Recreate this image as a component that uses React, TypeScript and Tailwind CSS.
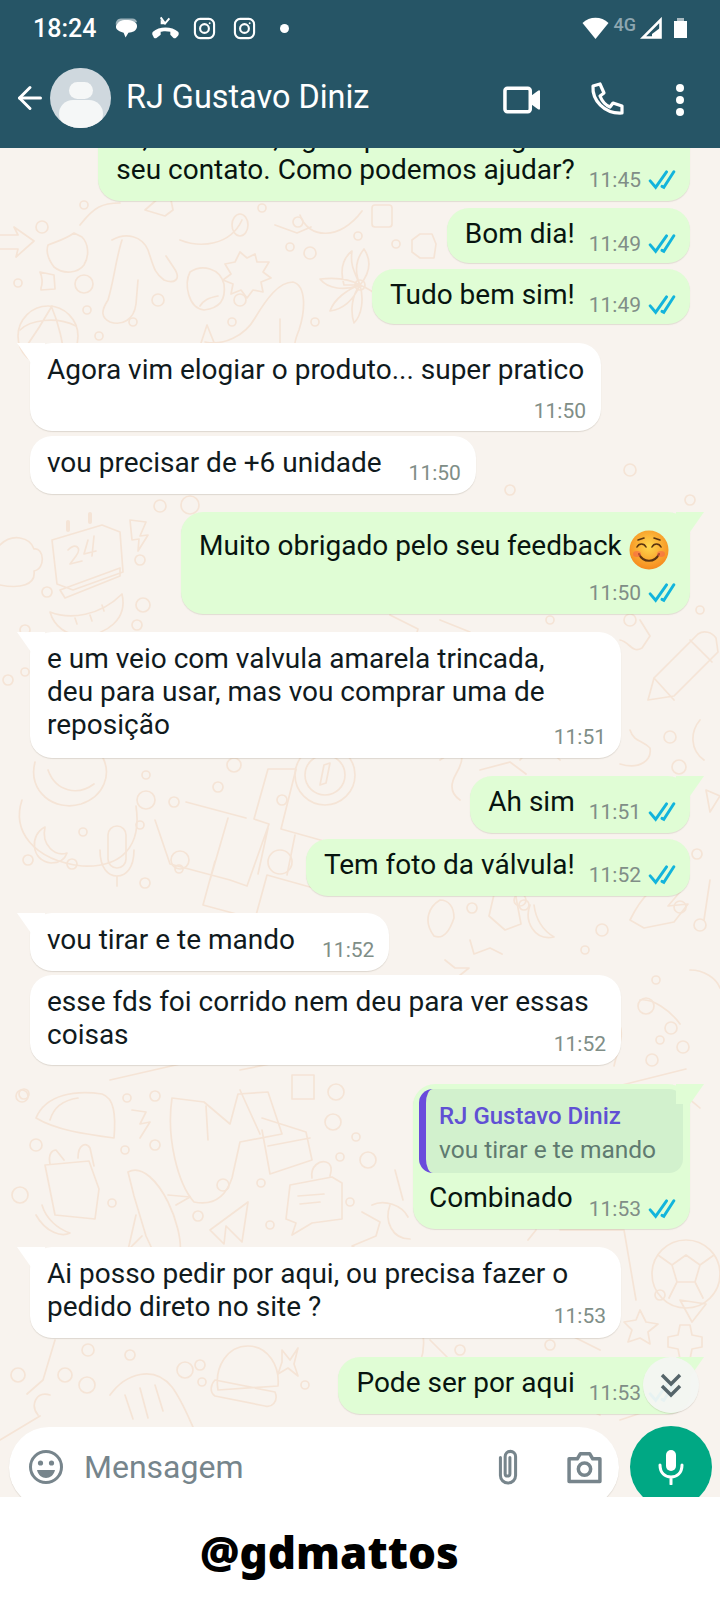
import React from 'react';
import { ArrowLeft } from 'lucide-react';

const FONT = "font-['Roboto',sans-serif]";

// small rings scattered over the wallpaper
const RINGS = [
  [42, 227, 6], [84, 205, 4], [262, 208, 4], [18, 283, 4], [84, 284, 9], [158, 300, 6], [87, 310, 4], [133, 322, 4],
  [240, 300, 6], [290, 247, 4], [310, 253, 6], [232, 322, 4], [315, 322, 4], [358, 236, 4], [396, 244, 4], [99, 336, 4],
  [160, 506, 6], [190, 505, 9], [140, 560, 5], [47, 592, 5], [143, 605, 7], [137, 625, 5], [25, 630, 5], [8, 680, 5],
  [25, 672, 4], [146, 775, 4], [234, 765, 7], [218, 787, 5], [146, 800, 9], [174, 802, 5], [282, 800, 5], [28, 860, 5],
  [83, 832, 4], [140, 825, 4], [180, 860, 9], [72, 864, 5], [179, 869, 4], [145, 883, 5], [280, 862, 12], [24, 1094, 5],
  [127, 1098, 4], [155, 1096, 5], [22, 1096, 6], [36, 1145, 6], [125, 1150, 4], [155, 1145, 5], [336, 1092, 8], [333, 1122, 8],
  [356, 1137, 4], [340, 1157, 4], [368, 1160, 8], [223, 1185, 6], [261, 1183, 4], [112, 1203, 4], [198, 1216, 5], [270, 1225, 4],
  [350, 1202, 4], [20, 1195, 8], [88, 1350, 6], [130, 1355, 5], [65, 1375, 7], [87, 1385, 8], [200, 1365, 5], [202, 1382, 4],
  [305, 1385, 4], [18, 1375, 7], [185, 1370, 8], [646, 1006, 8], [642, 1098, 5], [660, 1040, 4], [670, 737, 6], [679, 767, 7],
  [697, 854, 5], [680, 907, 6], [700, 925, 6], [602, 930, 6], [472, 908, 5], [524, 905, 5], [585, 950, 4], [656, 980, 4],
  [671, 1028, 6], [683, 1047, 6], [652, 1060, 6], [550, 1345, 5], [660, 1295, 5], [630, 620, 6], [700, 610, 4], [550, 620, 4],
  [400, 460, 6], [510, 490, 5], [520, 900, 6], [430, 990, 5], [460, 1350, 5], [420, 1330, 6], [630, 470, 6], [690, 500, 5],
];

function Wallpaper() {
  return (
    <svg className="absolute inset-0 h-full w-full" viewBox="0 148 720 1349" preserveAspectRatio="none" fill="none" stroke="#f5e4d6" strokeWidth="1.7" strokeLinecap="round" strokeLinejoin="round">
      {RINGS.map(([x, y, r], i) => <circle key={i} cx={x} cy={y} r={r} />)}
      {/* runner */}
      <path d="M80 225c14-18 22-22 40-22M48 245c10-4 18-6 26-12l8 4c6 6 8 18 2 28-6 8-20 10-30 2-6-8-8-16-6-22zM112 240c14-8 30-4 36 10 6 18 6 22 16 30 10 4 18 0 10-12l-8-12M122 240c-6 18-8 40-14 60-8 12-6 18 2 22 12 4 24-2 26-18l2-24" />
      <path d="M180 240c20 8 50 6 62-20M145 210l16-14 10 4 2 10-8 6z" />
      <ellipse cx="240" cy="225" rx="8" ry="11" />
      {/* bits on the left */}
      <path d="M0 235h18l-4-8 20 14-18 16 2-8H0M40 272l14 3 1 14-14 1 0-2c2-5 1-12-1-16z" />
      <circle cx="48" cy="336" r="30" />
      <path d="M20 330c10-10 36-14 56-4M24 350c14-20 20-30 28-44M52 308c6 14 12 36 12 54" />
      {/* badge, thumb, whale, flower */}
      <path d="M240 252l7 6 8-4 2 8 12 0-6 10 8 6-10 4 2 10-10-2-6 8-6-8-10 4 2-10-10-4 8-6-6-10 10-2z" />
      <path d="M190 272c12-8 30-4 34 12 2 16-4 24-20 26-16-2-20-26-14-38zM200 306c4-6 8-8 18-10" />
      <path d="M205 342c18 4 40-6 50-24 12-20 24-36 38-36 14 4 12 30 6 48-4 10-6 16-2 24M280 345v-26M215 345l-8-20-6 18" />
      <path d="M360 285c-6-14-4-26 4-36 8 12 6 24-4 36zM360 285c-6-14-10-20-8-34-10 8-12 20-8 34zM360 285c-10-6-22-8-40-6 8 10 24 12 40 6zM360 285c-12 4-26 14-30 26 14-2 24-12 30-26zM360 285c-8 10-10 26-6 38 8-8 10-24 6-38zM360 285c14 6 24 14 30 30" />
      <circle cx="360" cy="285" r="5" />
      <path d="M275 225l22 8 14-6M300 215c8 24 40 26 62-4" />
      <circle cx="298" cy="222" r="5" />
      <rect x="372" y="205" width="20" height="22" rx="3" />
      <path d="M412 240l8-6 12 0 4 10-2 14-14 0-8-6z" />
      {/* calendar */}
      <path d="M52 540l50-15 18 7 3 40-50 18-16-6zM60 590l60-22v8l-55 22z" />
      <path d="M68 530v-8M90 522v-8" strokeWidth="4" />
      <path d="M68 550c8-8 14-2 8 6l-6 8 12-3M88 540l-4 14 12-3M94 536l-2 20" />
      <path d="M130 520l16 2-6 14 8-1-10 16 1-12-7 1z" />
      {/* watermelon */}
      <path d="M50 612c20 8 50 4 72-18 6 26-16 40-38 42-18 0-30-10-34-24z" />
      <path d="M75 618l2 6M90 615l2 6M102 605l2 6" />
      <path d="M0 545c12-12 30-8 34 4 10-2 12 20 0 22 2 14-14 18-34 14" />
      {/* smiley and compass */}
      <path d="M35 762c-8 30 20 50 46 42 24-8 30-30 22-46M48 770c8 22 30 26 46 14" />
      <circle cx="325" cy="775" r="30" /><circle cx="325" cy="775" r="20" />
      <path d="M320 785l4-20 6-2-4 20z" />
      <path d="M22 800c-10 30 10 60 60 66 40 2 60-20 54-60" />
      {/* crossword */}
      <path d="M155 820l15 44 60 16 17 6 22-62-15-5 14-50h28l-15 60 50 14-14 46-50-14-12 44-52-14 12-44M186 802l60 16M210 880l18-62M268 828l-10 46M295 835l-8 40" />
      <path d="M45 827c-16 8-14 34 6 36 10 0 14-4 16-10-12 4-26-8-22-26z" />
      <rect x="108" y="826" width="18" height="42" rx="9" />
      <path d="M100 850c0 18 8 26 17 26s17-8 17-26M117 876v10" />
      {/* taco */}
      <path d="M36 1118c10-24 40-28 66-24 12 4 14 20 12 44-30-4-58-8-78-20zM50 1120c4-14 14-20 28-22" />
      <path d="M132 1110l14 2-6 12 10-2-10 16" />
      {/* boots and cake */}
      <path d="M172 1098c-6 40 6 86 22 104 20 4 32-6 38-24l8-36 42-8-14-42-30 2-8 30-26-22zM206 1106l2 34M240 1090l20 44M262 1118l44 14 6 28-42 14-8-44M268 1146l42-8" />
      <path d="M110 1080l70-16M240 1070l80-16" />
      <rect x="292" y="1075" width="22" height="24" />
      {/* bag */}
      <path d="M45 1165l10 50 40 4 4-30-10-28-44 4zM50 1164c-2-10 2-14 6-14l8 10M78 1158c0-14 8-16 12-10l4 18M36 1215c10 18 26 22 34 18-12-4-24-14-28-28" />
      {/* rocket */}
      <path d="M128 1172c14-8 30 10 40 30 8 16 14 38 12 52l-20 12-14-30-12-40zM168 1195l22 2-14 8M136 1215l-8 35 14-14M164 1268l10 22 12-12-8-24" />
      <path d="M210 1230l38-28-6 40-16-16-2 18z" />
      {/* chat bubbles */}
      <path d="M290 1185l42-8 10 6 0 36-30 4-20 12 4-12-10-4zM298 1196l26-2M300 1204l20-2M312 1178c-2-12 8-18 14-16 6 2 6 8 4 14" />
      <path d="M372 1205c12-6 30 0 36 12M362 1212l18 10-4 14-24 10 16 10M395 1170l8 30" />
      <path d="M390 1205c-6 16 2 34 20 34" />
      {/* hat, star, shrimp, guitar */}
      <path d="M218 1390c-4-24 10-44 30-44s32 20 30 40zM215 1380l60 12c4 10-4 16-10 14l-50-10c-6-4-4-12 0-16z" />
      <path d="M282 1350l8 10 8-12 -4 16 4 12-10-8-10 6 4-12z" />
      <path d="M110 1395c16-22 44-30 62-8 12 16 20 40 26 50M125 1395l8 24M140 1388l8 30M155 1385l8 26" />
      <path d="M55 1340l-12 40-16 14M50 1395c-14-4-20 10-12 20M0 1440l40-24" />
      {/* pencil and right side */}
      <path d="M648 700l6-22 44-44c6-4 14-2 18 4l2 14-44 44zM654 678l20 22M690 640l22 22" />
      <path d="M620 640c10 2 12 14 22 8l8-12-10-16M630 730c4 12 12 10 20 18 2 12-10 22-30 16" />
      <path d="M700 720c-10 12-10 30 4 40M706 790l14 6-10 16zM710 880l-6 40" />
      <path d="M440 760l18-12c6 6 4 16-2 26-8 14-2 22 4 26M480 770l30-8 16 12M520 760c10-14 30-12 40 0" />
      <path d="M440 900c-10 6-18 20-6 36 10 4 16-6 20-18 0-12-6-18-14-18zM495 890l20 2 6 32-16 6-16-14zM470 940l4 14 16-6 12 6M445 960l10 8 14 0-10 8M530 905c-6 16 4 36 24 32-10-6-18-16-20-32" />
      <path d="M630 920c12-24 26-40 44-36l6 8-12 14 20-2-14 18-30 6zM690 970c14 0 26 8 30 18M640 1000c12-2 30 10 40 24" />
      <path d="M560 1020c20-16 50-8 60 6 4 10-2 22-6 40" />
      <path d="M640 1100c14-10 40-12 60 8M622 1085l64-16" />
      <circle cx="686" cy="1274" r="34" />
      <path d="M672 1265l14-10 14 10-5 17h-18zM672 1265l-14-10M700 1265l14-10M677 1282l-8 16M695 1282l8 16M528 1240l8-10M560 1230l64 0 12 70" />
      <path d="M680 1300l26 4-14 18zM640 1310l6 12 12 2-10 8 2 12-10-6-12 4 4-12-8-8 12-2zM680 1325h10l2 10 10 2v10l-10 2-2 10h-10l-2-10-10-2v-10l10-2z" />
      <path d="M430 1340l40 40M540 1320l60 30M400 1300c30 20 30 60 8 80M470 1370l-20 30M500 1380c10-14 30-14 40 0M620 1420l30-10" />
      <path d="M400 460l30 10M440 620l30 12M390 615l28 14-6 20M600 1415l-14-6" />
    </svg>
  );
}

function Ticks() {
  return (
    <svg viewBox="0 0 30 22" className="h-[20px] w-[28px]" fill="none" stroke="#12b4dc" strokeWidth="3.2" strokeLinecap="round">
      <path d="M2 12l6 7L20 2" />
      <path d="M15 18l2 1L28 2" />
    </svg>
  );
}

function Time({ time, read }: { time: string; read?: boolean }) {
  return (
    <span className="flex shrink-0 items-center gap-[7px] text-[21px] leading-[22px] text-[#808e87]">
      {time}
      {read && <Ticks />}
    </span>
  );
}

function TailOut() {
  return <span className="absolute right-[-14px] top-0 h-[20px] w-[28px] bg-[#e0fdd5] [clip-path:polygon(0_0,100%_0,50%_100%,0_100%)]" />;
}

function TailIn() {
  return <span className="absolute left-[-13px] top-0 h-[20px] w-[28px] bg-white [clip-path:polygon(0_0,100%_0,100%_100%,50%_100%)]" />;
}

function Out({ time, tail, children, className = 'pb-[10px]' }: { time: string; tail?: boolean; children: React.ReactNode; className?: string }) {
  return (
    <div className={`relative mr-[30px] flex items-end gap-[14px] self-end rounded-[22px] bg-[#e0fdd5] pl-[18px] pr-[14px] pt-[10px] shadow-[0_1px_1px_rgba(120,110,90,0.18)] ${className}`}>
      {tail && <TailOut />}
      <span className="mb-[5px] whitespace-nowrap text-[28px] leading-[32px] text-[#07140f]">{children}</span>
      <Time time={time} read />
    </div>
  );
}

function In({ time, tail, multi, children, className = '' }: { time: string; tail?: boolean; multi?: boolean; children: React.ReactNode; className?: string }) {
  return (
    <div className={`relative ml-[30px] flex items-end self-start rounded-[22px] bg-white pl-[17px] pr-[15px] pt-[10px] shadow-[0_1px_1px_rgba(120,110,90,0.2)] ${multi ? 'w-[591px] justify-between' : 'gap-[27px]'} ${className || 'pb-[10px]'}`}>
      {tail && <TailIn />}
      <span className={`whitespace-nowrap text-[28px] leading-[33px] text-[#101a1d] ${multi ? 'mb-[4px] min-w-0 flex-1' : 'mb-[5px]'}`}>{children}</span>
      <Time time={time} />
    </div>
  );
}

function Smile() {
  return (
    <svg viewBox="0 0 40 40" className="mb-[-4px] ml-[7px] inline-block h-[40px] w-[40px] align-middle">
      <defs>
        <radialGradient id="face" cx="50%" cy="40%" r="60%">
          <stop offset="0%" stopColor="#ffd84d" />
          <stop offset="100%" stopColor="#f68a1e" />
        </radialGradient>
      </defs>
      <circle cx="20" cy="20" r="19.5" fill="url(#face)" />
      <path d="M8 17c2-4 7-4 9 0M23 17c2-4 7-4 9 0M9 10l6-2M25 8l6 2" fill="none" stroke="#5b3410" strokeWidth="1.6" strokeLinecap="round" />
      <path d="M10 24c4 9 16 9 20 0" fill="none" stroke="#5b3410" strokeWidth="2" strokeLinecap="round" />
      <ellipse cx="8" cy="24" rx="4" ry="3" fill="#f6604a" opacity="0.55" />
      <ellipse cx="32" cy="24" rx="4" ry="3" fill="#f6604a" opacity="0.55" />
    </svg>
  );
}

function InstaIcon() {
  return (
    <svg viewBox="0 0 24 24" className="h-[23px] w-[23px]" fill="none" stroke="white" strokeWidth="2.2">
      <rect x="2" y="2" width="20" height="20" rx="5.5" />
      <circle cx="12" cy="12" r="4.6" />
      <circle cx="17.4" cy="6.6" r="1" fill="white" stroke="none" />
    </svg>
  );
}

function StatusBar() {
  return (
    <div className="flex h-[54px] items-center pl-[33px] pr-[33px] pt-[2px]">
      <span className="text-[25px] font-medium leading-none text-white">18:24</span>
      <svg viewBox="0 0 24 22" className="ml-[19px] h-[24px] w-[23px]" fill="white">
        <path d="M6 1h12c3 0 5 2 5 4H6C4 5 2 6 1 8c-1-4 2-7 5-7z" opacity="0.55" />
        <path d="M8 3c7-1 15 1 15 6s-5 7-9 7l-3 5-2-5c-4-1-8-3-8-6s3-6 7-7z" />
      </svg>
      <svg viewBox="0 0 28 24" className="ml-[14px] h-[24px] w-[27px]" fill="white">
        <path d="M1 16c6-6 20-6 26 0 1 1 1 3 0 4l-2 2c-1 1-2 1-3 0l-3-3v-3c-3-1-8-1-10 0v3l-4 3c-1 1-2 1-3 0l-1-2c-1-1-1-3 0-4z" />
        <path d="M18 2l-5 6M9 1l5 7" fill="none" stroke="white" strokeWidth="2" />
        <path d="M9 8V3l5 5z" />
      </svg>
      <span className="ml-[14px]"><InstaIcon /></span>
      <span className="ml-[17px]"><InstaIcon /></span>
      <span className="ml-[24px] h-[9px] w-[9px] rounded-full bg-white" />
      <span className="ml-auto flex items-center">
        <svg viewBox="0 0 26 22" className="h-[22px] w-[27px]" fill="white"><path d="M0 6C7-1 19-1 26 6L13 22z" /></svg>
        <span className="ml-[5px] mt-[-7px] text-[18px] font-medium leading-none text-[#8ea7b1]">4G</span>
        <svg viewBox="0 0 22 22" className="ml-[4px] h-[22px] w-[22px]" fill="none" stroke="white" strokeWidth="2.6"><path d="M20.5 3v17.5H3z" /><path d="M20 11v9H12v-3z" fill="white" stroke="none" /></svg>
        <span className="relative ml-[12px] flex h-[20px] w-[13px] flex-col">
          <span className="mx-auto h-[3px] w-[7px] bg-[#a9bac1]" />
          <span className="flex-1 bg-white" />
        </span>
      </span>
    </div>
  );
}

function Toolbar() {
  return (
    <div className="flex h-[94px] items-start pl-[12px] pr-[36px] pt-[14px]">
      <ArrowLeft className="mt-[12px] h-[36px] w-[36px] shrink-0 text-white" strokeWidth={2} />
      <div className="ml-[2px] flex h-[60px] w-[61px] shrink-0 flex-col items-center overflow-hidden rounded-full bg-[#cfd8de]">
        <span className="mt-[14px] h-[25px] w-[24px] rounded-full bg-[#f5f7f7]" />
        <span className="mt-[1px] h-[40px] w-[44px] rounded-full bg-[#f5f7f7]" />
      </div>
      <span className="ml-[15px] mt-[10px] text-[32.4px] leading-[38px] text-white">RJ Gustavo Diniz</span>
      <svg viewBox="0 0 38 30" className="ml-auto mt-[16px] h-[32px] w-[37px]" fill="none" stroke="white" strokeWidth="3.6" strokeLinejoin="round">
        <rect x="2" y="3" width="26" height="24" rx="2.5" />
        <path d="M30 12l7-5v16l-7-5z" fill="white" />
      </svg>
      <svg viewBox="0 0 34 34" className="ml-[50px] mt-[14px] h-[34px] w-[34px]" fill="none" stroke="white" strokeWidth="3.2" strokeLinejoin="round">
        <path d="M3 4l7-2 4 9-4 3c2 5 5 9 10 11l3-4 9 3v7c-18 1-30-13-29-27z" />
      </svg>
      <span className="ml-[52px] mt-[16px] flex w-[8px] flex-col gap-[4px]">
        <span className="h-[8px] w-[8px] rounded-full bg-white" />
        <span className="h-[8px] w-[8px] rounded-full bg-white" />
        <span className="h-[8px] w-[8px] rounded-full bg-white" />
      </span>
    </div>
  );
}

function Composer() {
  return (
    <div className="relative mb-[-11px] mt-[12px] flex items-center pl-[9px] pr-[8px]">
      <div className="flex h-[81px] w-[610px] items-center rounded-[40px] bg-white pl-[19px] pr-[16px] shadow-[0_1px_1px_rgba(120,110,90,0.2)]">
        <svg viewBox="0 0 36 36" className="h-[36px] w-[36px]" fill="none">
          <circle cx="18" cy="18" r="15.5" stroke="#77858c" strokeWidth="3" />
          <circle cx="12.5" cy="14" r="2.6" fill="#77858c" />
          <circle cx="23.5" cy="14" r="2.6" fill="#77858c" />
          <path d="M9 21h18c-1 5-5 8-9 8s-8-3-9-8z" fill="#77858c" />
        </svg>
        <span className="ml-[20px] text-[32px] leading-none text-[#76858c]">Mensagem</span>
        <svg viewBox="0 0 24 38" className="ml-auto h-[36px] w-[24px]" fill="none" stroke="#77858c" strokeWidth="3.2" strokeLinecap="round">
          <path d="M4 9v19a8 8 0 0 0 16 0V8a5.500 5.500 0 0 0-11 0v18a2.500 2.500 0 0 0 5 0V9" />
        </svg>
        <svg viewBox="0 0 36 32" className="ml-[46px] h-[34px] w-[37px]" fill="none" stroke="#77858c" strokeWidth="3.4">
          <path d="M3 8h8l3-5h9l3 5h7v22H3z" strokeLinejoin="round" />
          <circle cx="18" cy="18" r="6" />
        </svg>
      </div>
      <div className="ml-[11px] flex h-[82px] w-[82px] shrink-0 items-center justify-center rounded-full bg-[#00a884]">
        <svg viewBox="0 0 28 36" className="h-[36px] w-[28px]" fill="none" stroke="white">
          <rect x="9" y="1" width="10" height="21" rx="5" fill="white" stroke="none" />
          <path d="M3 16c0 8 5 12 11 12s11-4 11-12M14 28v7" strokeWidth="3" strokeLinecap="round" />
        </svg>
      </div>
    </div>
  );
}

export default function App() {
  return (
    <div className={`flex h-[1600px] w-[720px] flex-col overflow-hidden bg-white ${FONT}`}>
      <header className="relative z-10 h-[148px] shrink-0 bg-[#265566]">
        <StatusBar />
        <Toolbar />
      </header>

      <main className="relative flex h-[1349px] shrink-0 flex-col justify-end overflow-hidden bg-[#f8f3ee]">
        <Wallpaper />
        <div className="relative flex flex-col">
          <Out time="11:45">
            Oi, tudo bem, agora posso entregar<br />seu contato. Como podemos ajudar?
          </Out>
          <Out time="11:49" className="mt-[7px] pb-[8px]">Bom dia!</Out>
          <Out time="11:49" className="mt-[6px] pb-[8px]">Tudo bem sim!</Out>

          <div className="relative ml-[30px] mt-[19px] flex w-[571px] flex-col self-start rounded-[22px] bg-white pb-[9px] pl-[17px] pr-[15px] pt-[10px] shadow-[0_1px_1px_rgba(120,110,90,0.2)]">
            <TailIn />
            <span className="whitespace-nowrap text-[28px] leading-[33px] text-[#101a1d]">Agora vim elogiar o produto... super pratico</span>
            <span className="mt-[14px] self-end"><Time time="11:50" /></span>
          </div>
          <In time="11:50" className="mt-[5px] pb-[10px]">vou precisar de +6 unidade</In>

          <div className="relative mr-[30px] mt-[18px] flex w-[509px] flex-col self-end rounded-[22px] bg-[#e0fdd5] pb-[10px] pl-[18px] pr-[14px] pt-[10px] shadow-[0_1px_1px_rgba(120,110,90,0.18)]">
            <TailOut />
            <span className="whitespace-nowrap text-[28px] leading-[48px] text-[#07140f]">Muito obrigado pelo seu feedback<Smile /></span>
            <span className="mt-[12px] self-end"><Time time="11:50" read /></span>
          </div>

          <In time="11:51" tail multi className="mt-[18px] pb-[10px]">
            <span className="block pb-[3px]">
              e um veio com valvula amarela trincada,<br />deu para usar, mas vou comprar uma de<br />reposição
            </span>
          </In>

          <Out time="11:51" tail className="mt-[18px] pb-[10px]">Ah sim</Out>
          <Out time="11:52" className="mt-[6px] pb-[10px]">Tem foto da válvula!</Out>

          <In time="11:52" tail className="mt-[17px] pb-[10px]">vou tirar e te mando</In>
          <In time="11:52" multi className="mt-[4px] pb-[10px]">
            esse fds foi corrido nem deu para ver essas<br />coisas
          </In>

          <div className="relative mr-[30px] mt-[19px] flex w-[277px] flex-col self-end rounded-[22px] bg-[#e0fdd5] pb-[9px] pl-[6px] pr-[7px] pt-[5px] shadow-[0_1px_1px_rgba(120,110,90,0.18)]">
            <TailOut />
            <div className="flex h-[84px] flex-col justify-center rounded-[14px] border-l-[7px] border-[#6a4bdc] bg-[#d2f1cd] pl-[13px] pt-[3px]">
              <span className="text-[24px] font-medium leading-[34px] text-[#6050d4]">RJ Gustavo Diniz</span>
              <span className="text-[24.5px] leading-[34px] text-[#5f7a70]">vou tirar e te mando</span>
            </div>
            <div className="mt-[8px] flex items-end justify-between pl-[10px] pr-[7px]">
              <span className="mb-[6px] text-[28px] leading-[33px] text-[#07140f]">Combinado</span>
              <Time time="11:53" read />
            </div>
          </div>

          <In time="11:53" tail multi className="mt-[18px] pb-[11px]">
            Ai posso pedir por aqui, ou precisa fazer o<br />pedido direto no site ?
          </In>

          <div className="relative mt-[19px] flex flex-col">
            <Out time="11:53" tail>Pode ser por aqui</Out>
            <button className="absolute right-[21px] top-0 flex h-[56px] w-[56px] items-center justify-center rounded-full bg-[#f3f6f2]/95 shadow-[0_1px_1px_rgba(120,110,90,0.2)]">
              <svg viewBox="0 0 24 26" className="h-[26px] w-[24px]" fill="none" stroke="#55656a" strokeWidth="3.4">
                <path d="M3 3l9 9 9-9M3 14l9 9 9-9" />
              </svg>
            </button>
          </div>

          <Composer />
        </div>
      </main>

      <footer className="flex flex-1 items-center pl-[200px] pt-[6px]">
        <span className="font-['Noto_Sans',sans-serif] text-[44px] font-black leading-none text-black">@gdmattos</span>
      </footer>
    </div>
  );
}
